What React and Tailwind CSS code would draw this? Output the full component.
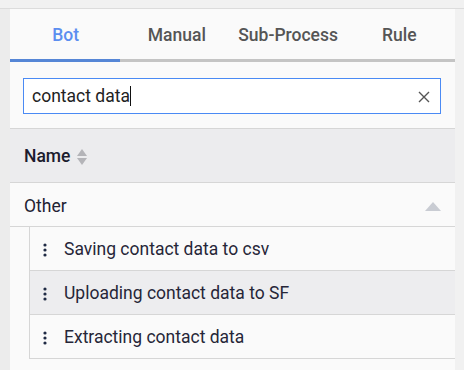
import React, { useState } from "react";

const items = [
  "Saving contact data to csv",
  "Uploading contact data to SF",
  "Extracting contact data",
];

function Kebab() {
  return (
    <svg width="4" height="14" viewBox="0 0 4 14" className="shrink-0">
      <circle cx="2" cy="2" r="1.6" fill="#1f2a44" />
      <circle cx="2" cy="7" r="1.6" fill="#1f2a44" />
      <circle cx="2" cy="12" r="1.6" fill="#1f2a44" />
    </svg>
  );
}

export default function App() {
  const [tab] = useState(0);
  const tabs = ["Bot", "Manual", "Sub-Process", "Rule"];

  return (
    <div
      className="w-[464px] h-[370px] bg-[#f1f1f1] pt-[8px] overflow-hidden"
      style={{ fontFamily: "Roboto, 'Liberation Sans', sans-serif" }}
    >
      <div className="border-t border-[#dcdcdc] flex h-full">
        <div className="w-[10px] bg-[#ececec]" />
        <div className="w-[445px] bg-[#fafafa] flex flex-col">
          {/* TABS */}
          <div className="flex h-[50px] pt-[3px]">
            {tabs.map((t, i) => (
              <div
                key={t}
                className={`flex-1 flex items-center justify-center text-[17.5px] font-medium ${
                  i === tab ? "text-[#5b8ef0]" : "text-[#555555]"
                }`}
              >
                {t}
              </div>
            ))}
          </div>
          <div className="flex h-[3px] bg-[#c4c4c4]">
            <div className="w-[110px] bg-[#5586d6]" />
          </div>

          {/* SEARCH */}
          <div className="px-[13px] pt-[16px] pb-[14px] border-b border-[#d6d6d6]">
            <div className="h-[36px] w-[418px] border border-[#4a8af4] bg-white flex items-center pl-[8px] pr-[10px] pt-[1px]">
              <span className="text-[17.5px] text-[#222222] flex-1">
                contact data<span className="inline-block w-px h-[20px] bg-[#111] align-[-4px]" />
              </span>
              <svg width="12" height="12" viewBox="0 0 12 12">
                <path d="M1 1 L11 11 M11 1 L1 11" stroke="#555" strokeWidth="1.4" />
              </svg>
            </div>
          </div>

          {/* HEADER */}
          <div className="h-[54px] bg-[#ececee] border-b border-[#d6d6d6] flex items-center pl-[14px] gap-[7px] pt-[2px]">
            <span className="text-[17.5px] font-medium text-[#1c1c2e]">Name</span>
            <svg width="10" height="18" viewBox="0 0 10 18">
              <path d="M5 1 L10 8 L0 8 Z" fill="#b4b4b8" />
              <path d="M5 17 L10 10 L0 10 Z" fill="#b4b4b8" />
            </svg>
          </div>

          {/* GROUP */}
          <div className="h-[44px] border-b border-[#d6d6d6] flex items-center justify-between pl-[14px] pr-[14px] pt-[3px]">
            <span className="text-[17.5px] text-[#222233]">Other</span>
            <svg width="16" height="9" viewBox="0 0 16 9">
              <path d="M8 0 L16 9 L0 9 Z" fill="#c9ccd3" />
            </svg>
          </div>

          <div className="ml-[19px] border-l border-[#d6d6d6]">
            {items.map((it, i) => (
              <div
                key={it}
                className={`h-[44px] border-b border-[#d6d6d6] flex items-center pl-[13px] gap-[17px] pt-[2px] ${
                  i === 1 ? "bg-[#ededef]" : ""
                }`}
              >
                <Kebab />
                <span className="text-[17.5px] text-[#262638]">{it}</span>
              </div>
            ))}
          </div>
        </div>
        <div className="flex-1 bg-[#f1f1f1]" />
      </div>
    </div>
  );
}
